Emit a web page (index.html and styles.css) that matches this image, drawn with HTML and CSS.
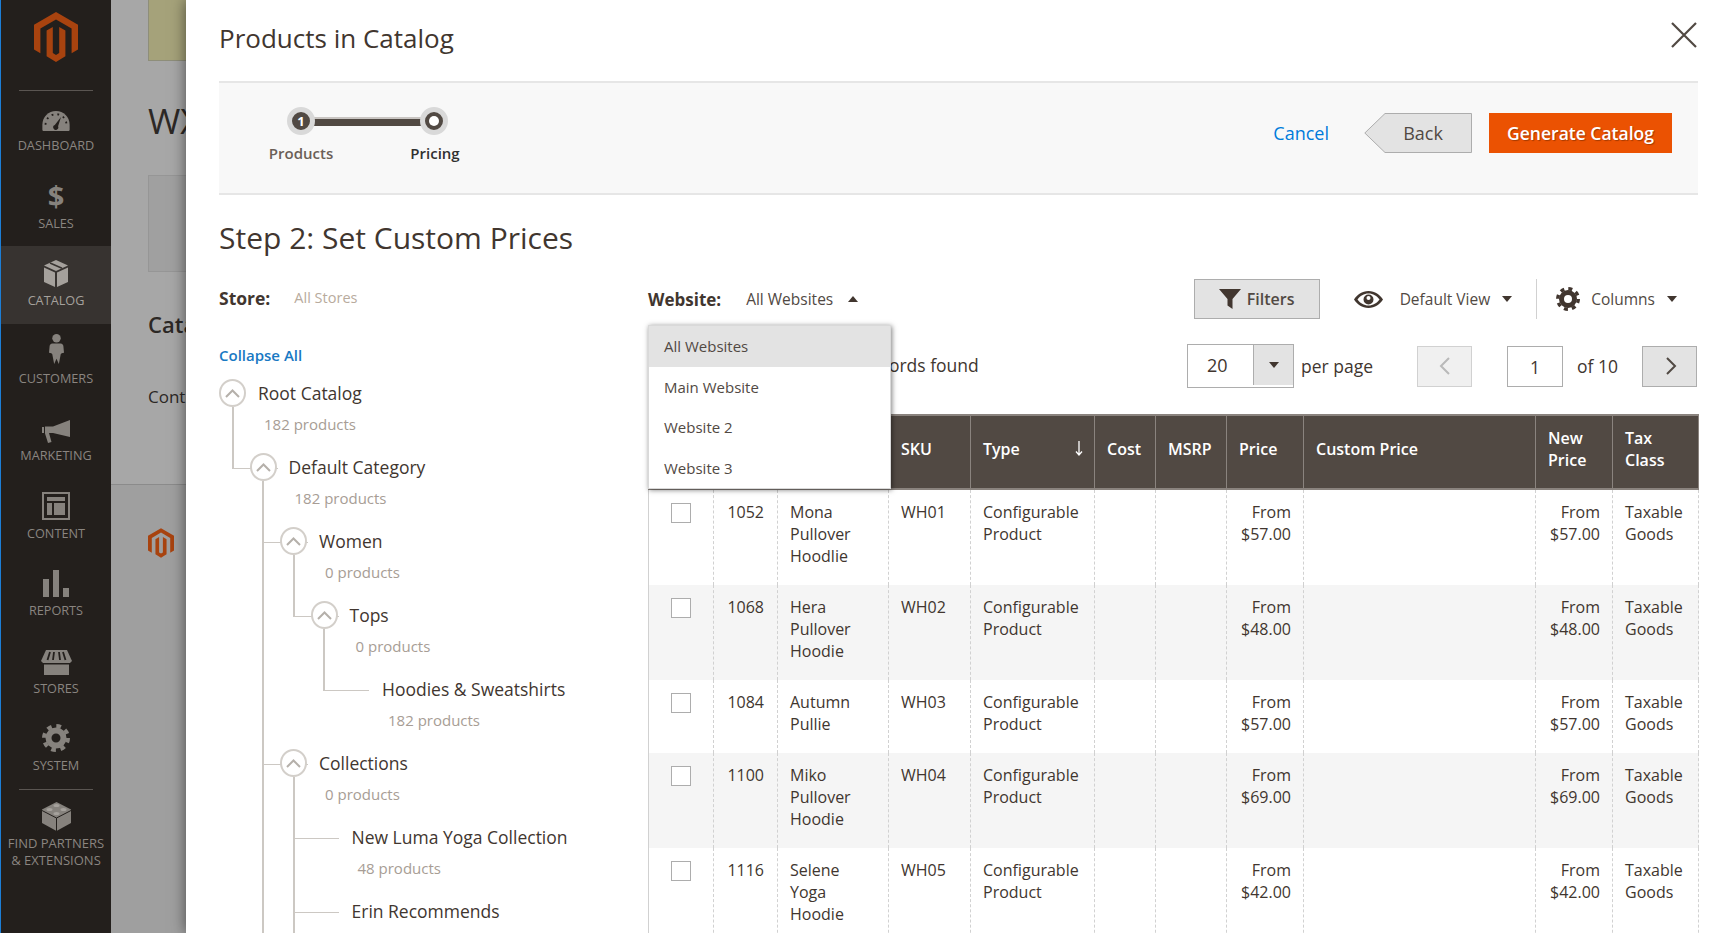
FILE: index.html
```html
<!DOCTYPE html>
<html lang="en">
<head>
    <meta charset="UTF-8">
    <meta name="viewport" content="width=device-width, initial-scale=1.0">
    <title>Products in Catalog</title>
    <link rel="stylesheet" href="styles.css">
</head>
<body>
    <aside class="sidebar">
        <div class="side-logo">
            <svg width="44" height="50" viewBox="0 0 44 50"><path fill="#a8430f" d="M22 0 44 12.7V37.6L37.6 41.3V16.4L22 7.4 6.4 16.4V41.3L0 37.6V12.7ZM12.6 18.5 18.8 14.9V41L22 42.9 25.2 41V14.9L31.4 18.5V44.2L22 50 12.6 44.2Z"/></svg>
        </div>
        <div class="side-sep"></div>
        <nav>
            <a class="nav-item">
                <span class="nav-icon"><svg class="down-3" width="28" height="20" viewBox="0 0 30 22"><path fill="#86827d" d="M15 0C6.7 0 0 6.7 0 15v5.5c0 .8.7 1.500 1.500 1.500h27c.8 0 1.500-.7 1.500-1.500V15C30 6.700 23.300 0 15 0Z"/><path fill="none" stroke="#231f1c" stroke-width="2" stroke-dasharray="2 4.500" d="M3.500 15a11.500 11.500 0 0 1 23 0"/><path fill="#231f1c" d="M20.500 6.500 17.300 16.800a2.800 2.800 0 1 1-3.600-1.500Z"/></svg></span>
                <span>Dashboard</span>
            </a>
            <a class="nav-item">
                <span class="nav-icon nav-dollar">$</span>
                <span>Sales</span>
            </a>
            <a class="nav-item active">
                <span class="nav-icon"><svg width="24" height="27" viewBox="0 0 24 27"><path fill="#a5a19c" d="M12 0 24 5.500 12 11 0 5.500Z"/><path fill="#a5a19c" d="M0 7.500 11 12.500V27L0 22ZM24 7.500 13 12.500V27L24 22Z"/><path fill="none" stroke="#373330" stroke-width="1.500" d="M6 3 18 8.200"/></svg></span>
                <span>Catalog</span>
            </a>
            <a class="nav-item">
                <span class="nav-icon"><svg class="up-2" width="15" height="30" viewBox="0 0 16 32"><circle cx="8" cy="4.500" r="4.500" fill="#86827d"/><path fill="#86827d" d="M3.500 10h9c1.500 0 2.500 1 2.800 2.500l.7 7.500-2.500.5-1 1L10.500 32 8 26.500 5.500 32 3.500 21.500l-1-1-2.500-.5.700-7.500C1 11 2 10 3.500 10Z"/></svg></span>
                <span>Customers</span>
            </a>
            <a class="nav-item">
                <span class="nav-icon"><svg class="down-3" width="28" height="23" viewBox="0 0 28 23"><path fill="#86827d" d="M28 0V17L11 13H7L9.500 22 6 23 3 13.500V6.500H11ZM0 7H2V13H0Z"/></svg></span>
                <span>Marketing</span>
            </a>
            <a class="nav-item">
                <span class="nav-icon"><svg width="28" height="28" viewBox="0 0 28 28"><path fill="none" stroke="#86827d" stroke-width="2" d="M1 1H27V27H1Z"/><path fill="#86827d" d="M5 5H23V9H5ZM5 11H10V23H5ZM12 11H23V23H12Z"/></svg></span>
                <span>Content</span>
            </a>
            <a class="nav-item">
                <span class="nav-icon"><svg width="26" height="27" viewBox="0 0 26 27"><path fill="#86827d" d="M0 9H6V27H0ZM10 0H16V27H10ZM20 18H26V27H20Z"/></svg></span>
                <span>Reports</span>
            </a>
            <a class="nav-item">
                <span class="nav-icon"><svg class="down-2" width="31" height="25" viewBox="0 0 31 25"><path fill="#86827d" d="M5 0H26L31 11 29 13H2L0 11Z"/><path fill="none" stroke="#231f1c" stroke-width="1.800" d="M9 2 6.500 10M13 2 12 10M18 2 19 10M22 2 24.500 10"/><path fill="#86827d" d="M3 14.500H28V25H3Z"/></svg></span>
                <span>Stores</span>
            </a>
            <a class="nav-item">
                <span class="nav-icon"><svg width="28" height="28" viewBox="0 0 28 28"><circle cx="14" cy="14" r="7.500" fill="none" stroke="#86827d" stroke-width="6"/><circle cx="14" cy="14" r="12" fill="none" stroke="#86827d" stroke-width="4" stroke-dasharray="4.700 4.720"/></svg></span>
                <span>System</span>
            </a>
            <div class="side-sep"></div>
            <a class="nav-item nav-last">
                <span class="nav-icon"><svg width="29" height="29" viewBox="0 0 29 29"><path fill="#86827d" d="M14.500 0 29 7.500V21L14.500 29 0 21V7.500Z"/><path fill="none" stroke="#231f1c" stroke-width="1" d="M0 8.500 14.500 16 29 8.500M14.500 16V29"/><ellipse cx="14.500" cy="3.500" rx="3" ry="1.500" fill="#a5a19c"/><ellipse cx="7.500" cy="7.500" rx="3" ry="1.500" fill="#a5a19c"/><ellipse cx="21.500" cy="7.500" rx="3" ry="1.500" fill="#a5a19c"/><ellipse cx="14.500" cy="11.500" rx="3" ry="1.500" fill="#a5a19c"/></svg></span>
                <span>Find Partners<br>&amp; Extensions</span>
            </a>
        </nav>
    </aside>

    <div class="backdrop">
        <div class="back-inner">
            <div class="back-thumb"></div>
            <div class="back-title">WX Catalog</div>
            <div class="back-box"></div>
            <div class="back-sub">Catalog</div>
            <div class="back-text">Content</div>
        </div>
        <div class="back-foot">
            <svg width="26" height="30" viewBox="0 0 44 50"><path fill="#a8430f" d="M22 0 44 12.700V37.600L37.600 41.300V16.400L22 7.400 6.400 16.400V41.300L0 37.600V12.700ZM12.600 18.500 18.800 14.900V41L22 42.900 25.200 41V14.900L31.400 18.500V44.200L22 50 12.600 44.200Z"/></svg>
        </div>
    </div>

    <main class="modal">
        <header class="modal-head">
            <h1>Products in Catalog</h1>
            <svg class="close-icon" width="26" height="26" viewBox="0 0 26 26"><path fill="none" stroke="#514943" stroke-width="2.200" d="M1 1 25 25M25 1 1 25"/></svg>
        </header>

        <section class="wizard">
            <div class="steps">
                <div class="step-track">
                    <span class="dot dot-num">1</span>
                    <span class="bar"></span>
                    <span class="dot dot-ring"></span>
                </div>
                <div class="step-labels">
                    <span class="step-label">Products</span>
                    <span class="step-label current">Pricing</span>
                </div>
            </div>
            <div class="wizard-actions">
                <a class="cancel">Cancel</a>
                <button class="btn-back">
                    <svg class="back-shape" viewBox="0 0 108 40" preserveAspectRatio="none"><polygon points="107.500,.5 21,.5 .8,20 21,39.500 107.500,39.500" fill="#e3e3e3" stroke="#adadad"/></svg>
                    <span>Back</span>
                </button>
                <button class="btn-primary">Generate Catalog</button>
            </div>
        </section>

        <h2>Step 2: Set Custom Prices</h2>

        <div class="columns">
            <div class="left-col">
                <div class="store-row">
                    <span class="field-label">Store:</span>
                    <span class="store-value">All Stores</span>
                </div>
                <a class="collapse-all">Collapse All</a>

                <ul class="tree tree-root">
                    <li>
                        <div class="node"><span class="toggle"><svg width="15" height="9" viewBox="0 0 15 9"><path fill="none" stroke="#b5b0aa" stroke-width="2" d="M1 8 7.500 1.500 14 8"/></svg></span><span class="node-name">Root Catalog</span></div>
                        <div class="count">182 products</div>
                        <ul class="tree">
                            <li>
                                <div class="node"><span class="toggle"><svg width="15" height="9" viewBox="0 0 15 9"><path fill="none" stroke="#b5b0aa" stroke-width="2" d="M1 8 7.500 1.500 14 8"/></svg></span><span class="node-name">Default Category</span></div>
                                <div class="count">182 products</div>
                                <ul class="tree">
                                    <li>
                                        <div class="node"><span class="toggle"><svg width="15" height="9" viewBox="0 0 15 9"><path fill="none" stroke="#b5b0aa" stroke-width="2" d="M1 8 7.500 1.500 14 8"/></svg></span><span class="node-name">Women</span></div>
                                        <div class="count">0 products</div>
                                        <ul class="tree">
                                            <li>
                                                <div class="node"><span class="toggle"><svg width="15" height="9" viewBox="0 0 15 9"><path fill="none" stroke="#b5b0aa" stroke-width="2" d="M1 8 7.500 1.500 14 8"/></svg></span><span class="node-name">Tops</span></div>
                                                <div class="count">0 products</div>
                                                <ul class="tree">
                                                    <li class="leaf">
                                                        <div class="node"><span class="node-name">Hoodies &amp; Sweatshirts</span></div>
                                                        <div class="count">182 products</div>
                                                    </li>
                                                </ul>
                                            </li>
                                        </ul>
                                    </li>
                                    <li>
                                        <div class="node"><span class="toggle"><svg width="15" height="9" viewBox="0 0 15 9"><path fill="none" stroke="#b5b0aa" stroke-width="2" d="M1 8 7.500 1.500 14 8"/></svg></span><span class="node-name">Collections</span></div>
                                        <div class="count">0 products</div>
                                        <ul class="tree">
                                            <li class="leaf">
                                                <div class="node"><span class="node-name">New Luma Yoga Collection</span></div>
                                                <div class="count">48 products</div>
                                            </li>
                                            <li class="leaf">
                                                <div class="node"><span class="node-name">Erin Recommends</span></div>
                                                <div class="count">12 products</div>
                                            </li>
                                            <li class="leaf">
                                                <div class="node"><span class="node-name">Performance Fabrics</span></div>
                                            </li>
                                        </ul>
                                    </li>
                                    <li class="leaf">
                                        <div class="node"><span class="node-name">Promotions</span></div>
                                    </li>
                                </ul>
                            </li>
                        </ul>
                    </li>
                </ul>
            </div>

            <div class="right-col">
                <div class="toolbar">
                    <span class="field-label">Website:</span>
                    <span class="website-value">All Websites</span>
                    <span class="caret caret-up"></span>
                    <button class="btn-filters">
                        <svg width="22" height="20" viewBox="0 0 22 20"><path fill="#41362f" d="M0 0H22L13.500 10V20L8.500 16.500V10Z"/></svg>
                        Filters
                    </button>
                    <svg class="eye" width="29" height="17" viewBox="0 0 29 17"><path fill="#41362f" fill-rule="evenodd" d="M14.500 0C21 0 26 4 29 8.500 26 13 21 17 14.500 17S3 13 0 8.500C3 4 8 0 14.500 0ZM14.500 2.500C10 2.500 6 5 3.500 8.500 6 12 10 14.500 14.500 14.500S23 12 25.500 8.500C23 5 19 2.500 14.500 2.500ZM14.500 3.500A5 5 0 1 1 14.500 13.500 5 5 0 1 1 14.500 3.500Z"/><circle cx="14.500" cy="7" r="2" fill="#fff"/></svg>
                    <span class="action-text">Default View</span>
                    <span class="caret caret-view"></span>
                    <span class="tool-sep"></span>
                    <svg class="gear" width="24" height="24" viewBox="0 0 24 24"><circle cx="12" cy="12" r="6.500" fill="none" stroke="#41362f" stroke-width="5"/><circle cx="12" cy="12" r="10.300" fill="none" stroke="#41362f" stroke-width="3.400" stroke-dasharray="4 4.090"/></svg>
                    <span class="action-text">Columns</span>
                    <span class="caret caret-cols"></span>
                </div>

                <div class="dropdown">
                    <div class="dropdown-item selected">All Websites</div>
                    <div class="dropdown-item">Main Website</div>
                    <div class="dropdown-item">Website 2</div>
                    <div class="dropdown-item">Website 3</div>
                </div>

                <div class="pager">
                    <span class="records">182 records found</span>
                    <div class="per-page">
                        <span class="per-value">20</span>
                        <span class="per-btn"><span class="caret"></span></span>
                    </div>
                    <span class="per-label">per page</span>
                    <button class="page-btn disabled"><svg width="11" height="18" viewBox="0 0 11 18"><path fill="none" stroke="#b9b9b9" stroke-width="2" d="M10 1 2 9 10 17"/></svg></button>
                    <span class="page-input">1</span>
                    <span class="page-of">of 10</span>
                    <button class="page-btn page-next"><svg width="11" height="18" viewBox="0 0 11 18"><path fill="none" stroke="#514943" stroke-width="2" d="M1 1 9 9 1 17"/></svg></button>
                </div>

                <table class="grid">
                    <colgroup>
                        <col class="c-check"><col class="c-id"><col class="c-name"><col class="c-sku"><col class="c-type"><col class="c-cost"><col class="c-msrp"><col class="c-price"><col class="c-custom"><col class="c-new"><col class="c-tax">
                    </colgroup>
                    <thead>
                        <tr>
                            <th></th>
                            <th>ID</th>
                            <th>Name</th>
                            <th>SKU</th>
                            <th><div class="th-sort">Type <svg class="sort-arrow" width="8" height="15" viewBox="0 0 8 15"><path fill="none" stroke="#fff" stroke-width="1.300" d="M4 0V14M1 10.500 4 14 7 10.500"/></svg></div></th>
                            <th>Cost</th>
                            <th>MSRP</th>
                            <th>Price</th>
                            <th>Custom Price</th>
                            <th>New Price</th>
                            <th>Tax Class</th>
                        </tr>
                    </thead>
                    <tbody>
                        <tr>
                            <td><span class="check"></span></td><td class="num">1052</td><td>Mona Pullover Hoodlie</td><td>WH01</td><td>Configurable Product</td><td></td><td></td><td class="num">From $57.00</td><td></td><td class="num">From $57.00</td><td>Taxable Goods</td>
                        </tr>
                        <tr>
                            <td><span class="check"></span></td><td class="num">1068</td><td>Hera Pullover Hoodie</td><td>WH02</td><td>Configurable Product</td><td></td><td></td><td class="num">From $48.00</td><td></td><td class="num">From $48.00</td><td>Taxable Goods</td>
                        </tr>
                        <tr>
                            <td><span class="check"></span></td><td class="num">1084</td><td>Autumn Pullie</td><td>WH03</td><td>Configurable Product</td><td></td><td></td><td class="num">From $57.00</td><td></td><td class="num">From $57.00</td><td>Taxable Goods</td>
                        </tr>
                        <tr>
                            <td><span class="check"></span></td><td class="num">1100</td><td>Miko Pullover Hoodie</td><td>WH04</td><td>Configurable Product</td><td></td><td></td><td class="num">From $69.00</td><td></td><td class="num">From $69.00</td><td>Taxable Goods</td>
                        </tr>
                        <tr>
                            <td><span class="check"></span></td><td class="num">1116</td><td>Selene Yoga Hoodie</td><td>WH05</td><td>Configurable Product</td><td></td><td></td><td class="num">From $42.00</td><td></td><td class="num">From $42.00</td><td>Taxable Goods</td>
                        </tr>
                    </tbody>
                </table>
            </div>
        </div>
    </main>
</body>
</html>
```
FILE: styles.css
```css
* {
    box-sizing: border-box;
}
html, body {
    height: 100%;
    margin: 0;
    overflow: hidden;
}
body {
    display: flex;
    font-family: "Open Sans", sans-serif;
    font-size: 16px;
    color: #41362f;
    background: #a5a5a5;
}

/* sidebar */
.sidebar {
    width: 111px;
    flex: none;
    background: #231f1c;
    border-left: 1px solid #1c7ed6;
}
.side-logo {
    height: 90px;
    padding-top: 12px;
    text-align: center;
}
.side-sep {
    height: 1px;
    margin: 0 18px;
    background: #5a5551;
}
.nav-item {
    display: block;
    height: 77.5px;
    padding-top: 8px;
    text-align: center;
    font-size: 12.7px;
    line-height: 17px;
    text-transform: uppercase;
    color: #8a8580;
}
.nav-item.active {
    background: #373330;
    color: #a5a19c;
}
.nav-last {
    font-size: 13px;
}
.nav-last .nav-icon {
    height: 37px;
}
.nav-icon {
    display: flex;
    height: 38px;
    align-items: center;
    justify-content: center;
    color: #86827d;
}
.nav-dollar {
    font-size: 29px;
    font-weight: 700;
}
.down-3 {
    margin-top: 6px;
}
.down-2 {
    margin-top: 4px;
}
.up-2 {
    margin-bottom: 4px;
}

/* page behind the modal */
.backdrop {
    width: 75px;
    flex: none;
    overflow: hidden;
    white-space: nowrap;
    color: #2c2825;
}
.back-inner {
    height: 485px;
    padding-left: 37px;
    border-bottom: 1px solid #8b8b8b;
    background: #a7a7a7;
}
.back-thumb {
    width: 200px;
    height: 61px;
    background: #a5a27a;
    border: 1px solid #8e8e7a;
    border-top: 0;
}
.back-title {
    margin-top: 36px;
    font-size: 35px;
    line-height: 48px;
}
.back-box {
    width: 200px;
    height: 97px;
    margin-top: 30px;
    border: 1px solid #969696;
    background: #a0a0a0;
}
.back-sub {
    margin-top: 37px;
    font-size: 22px;
    line-height: 30px;
    font-weight: 600;
}
.back-text {
    margin-top: 46px;
    font-size: 17px;
    line-height: 24px;
}
.back-foot {
    height: 448px;
    padding: 43px 0 0 37px;
    background: #9f9f9f;
}

/* modal */
.modal {
    flex: 1;
    min-width: 0;
    height: 933px;
    padding: 0 30px 0 33px;
    overflow: hidden;
    background: #fff;
    box-shadow: 0 0 14px rgba(0, 0, 0, .55);
    position: relative;
}
.modal-head {
    display: flex;
    justify-content: space-between;
    height: 81px;
}
h1 {
    margin: 20px 0 0;
    font-size: 26px;
    line-height: 36px;
    font-weight: 400;
}
.close-icon {
    margin-top: 22px;
    margin-right: 1px;
}
.wizard {
    display: flex;
    justify-content: space-between;
    height: 114px;
    background: #f8f8f8;
    border-top: 2px solid #e6e6e6;
    border-bottom: 2px solid #e6e6e6;
}
.steps {
    margin-left: 68px;
    padding-top: 24px;
}
.step-track {
    display: flex;
    align-items: center;
}
.dot {
    width: 28px;
    height: 28px;
    flex: none;
    border-radius: 50%;
    background: #514943;
    border: 5px solid #d9d9d9;
    position: relative;
    z-index: 1;
}
.dot-num {
    color: #fff;
    font-size: 13px;
    font-weight: 700;
    line-height: 18px;
    text-align: center;
}
.dot-ring::after {
    content: "";
    display: block;
    width: 10px;
    height: 10px;
    margin: 4px;
    border-radius: 50%;
    background: #fff;
}
.bar {
    width: 107px;
    height: 9px;
    flex: none;
    margin: 0 -1px;
    background: #514943;
    border-top: 2px solid #c9c5c2;
}
.step-labels {
    display: flex;
    margin: 8px 0 0 -53px;
}
.step-label {
    width: 134px;
    text-align: center;
    font-size: 15px;
    line-height: 20px;
    font-weight: 600;
    color: #6b5f57;
}
.step-label.current {
    color: #303030;
}
.wizard-actions {
    display: flex;
    align-items: flex-start;
    padding: 30px 26px 0 0;
}
.cancel {
    margin: 7px 35px 0 0;
    font-size: 18px;
    line-height: 26px;
    color: #007bdb;
}
button {
    font-family: inherit;
    cursor: pointer;
}
.btn-back {
    width: 108px;
    height: 40px;
    padding: 0 0 0 10px;
    border: 0;
    background: none;
    font-size: 18px;
    color: #514943;
    position: relative;
}
.back-shape {
    position: absolute;
    left: 0;
    top: 0;
    width: 100%;
    height: 100%;
}
.btn-back span {
    position: relative;
}
.btn-primary {
    width: 183px;
    height: 40px;
    margin-left: 17px;
    border: 0;
    background: #eb5202;
    color: #fff;
    font-size: 17.5px;
    font-weight: 600;
    text-shadow: 1px 1px 1px rgba(0, 0, 0, .3);
}
h2 {
    margin: 22px 0 0;
    height: 62px;
    font-size: 30px;
    line-height: 42px;
    font-weight: 400;
}
.columns {
    display: flex;
}
.left-col {
    width: 429px;
    flex: none;
}
.store-row {
    display: flex;
    align-items: center;
    height: 37px;
}
.field-label {
    font-weight: 700;
    font-size: 17px;
}
.store-row .field-label {
    font-size: 17.5px;
}
.store-value {
    margin-left: 24px;
    font-size: 14.5px;
    color: #b8ab9d;
}
.collapse-all {
    display: block;
    margin-top: 29px;
    font-size: 15px;
    line-height: 20px;
    font-weight: 600;
    color: #1979c3;
}

/* category tree */
.tree {
    list-style: none;
    margin: 0;
    padding: 0;
}
.tree .tree {
    margin-left: 30.5px;
}
.tree-root {
    margin-top: 14px;
}
.tree li {
    position: relative;
}
.tree .tree > li::before {
    content: "";
    position: absolute;
    left: -18px;
    top: -46px;
    width: 44px;
    height: 61px;
    border-left: 2px solid #ccc8c3;
    border-bottom: 1px solid #ccc8c3;
}
.tree .tree > li:not(:last-child)::after {
    content: "";
    position: absolute;
    left: -18px;
    top: 14px;
    bottom: 0;
    border-left: 2px solid #ccc8c3;
}
.node {
    display: flex;
    align-items: center;
    height: 28px;
    position: relative;
    z-index: 1;
}
.toggle {
    display: flex;
    align-items: center;
    justify-content: center;
    width: 27px;
    height: 28px;
    margin-right: 12px;
    border: 2px solid #d3cfca;
    border-radius: 50%;
    background: #fff;
}
.node-name {
    font-size: 17.5px;
    line-height: 26px;
    white-space: nowrap;
}
.leaf .node-name {
    margin-left: 41px;
}
.count {
    height: 46px;
    padding: 7px 0 0 45px;
    font-size: 15px;
    line-height: 20px;
    color: #a79d95;
}
.leaf .count {
    padding-left: 47px;
}

/* toolbar and pager */
.right-col {
    flex: 1;
    min-width: 0;
    position: relative;
}
.toolbar {
    display: flex;
    align-items: center;
    height: 40px;
}
.website-value {
    margin-left: 25px;
    font-size: 15.5px;
    color: #514943;
}
.caret {
    display: inline-block;
    width: 0;
    height: 0;
    border-left: 5px solid transparent;
    border-right: 5px solid transparent;
    border-top: 6px solid #41362f;
}
.caret-up {
    margin-left: 15px;
    border-top: 0;
    border-bottom: 6px solid #41362f;
}
.btn-filters {
    display: flex;
    align-items: center;
    justify-content: center;
    gap: 6px;
    width: 126px;
    height: 40px;
    margin-left: auto;
    background: #e3e3e3;
    border: 1px solid #adadad;
    font-size: 16px;
    font-weight: 600;
    color: #514943;
}
.eye {
    margin-left: 34px;
}
.action-text {
    margin-left: 17px;
    font-size: 15.5px;
    color: #514943;
}
.caret-view {
    margin-left: 12px;
}
.tool-sep {
    width: 1px;
    height: 40px;
    margin: 0 19px 0 24px;
    background: #d1d1d1;
}
.gear + .action-text {
    margin-left: 11px;
}
.caret-cols {
    margin: 0 21px 0 12px;
}
.dropdown {
    position: absolute;
    left: 0;
    top: 46px;
    width: 243px;
    height: 164px;
    background: #fff;
    box-shadow: 1px 1px 5px rgba(0, 0, 0, .5);
    border: 1px solid #d9d9d9;
    z-index: 5;
}
.dropdown-item {
    height: 40.7px;
    padding-left: 15px;
    font-size: 15px;
    line-height: 40px;
    color: #514943;
}
.dropdown-item.selected {
    background: #e3e3e3;
}
.pager {
    display: flex;
    align-items: center;
    height: 44px;
    margin-top: 25px;
    font-size: 17.5px;
}
.records {
    margin: 0 0 2px 181px;
    white-space: nowrap;
}
.per-page {
    display: flex;
    width: 107px;
    height: 44px;
    margin-left: auto;
    border: 1px solid #adadad;
}
.per-value {
    flex: 1;
    padding-left: 19px;
    font-size: 18px;
    line-height: 40px;
}
.per-btn {
    display: flex;
    align-items: center;
    justify-content: center;
    width: 40px;
    margin-bottom: 2px;
    background: #e3e3e3;
    border-left: 1px solid #adadad;
}
.per-label {
    margin: 0 44px 0 7px;
}
.page-btn {
    display: flex;
    align-items: center;
    justify-content: center;
    width: 55px;
    height: 41px;
    padding: 0;
    background: #e3e3e3;
    border: 1px solid #adadad;
}
.page-btn.disabled {
    background: #f0f0f0;
    border-color: #d1d1d1;
}
.page-input {
    width: 56px;
    height: 41px;
    margin-left: 35px;
    border: 1px solid #adadad;
    text-align: center;
    line-height: 41px;
}
.page-of {
    margin: 0 24px 0 14px;
}
.page-next {
    margin-right: 1px;
    padding-left: 3px;
}

/* products grid */
.grid {
    width: 1050px;
    margin-top: 26px;
    border-collapse: collapse;
    table-layout: fixed;
    line-height: 22px;
}
.c-check { width: 65px; }
.c-id { width: 64px; }
.c-name { width: 111px; }
.c-sku { width: 82px; }
.c-type { width: 124px; }
.c-cost { width: 61px; }
.c-msrp { width: 71px; }
.c-price { width: 77px; }
.c-custom { width: 232px; }
.c-new { width: 77px; }
.c-tax { width: 86px; }
th {
    height: 74px;
    padding: 0 12px 7px;
    background: #514943;
    color: #fff;
    font-weight: 600;
    text-align: left;
    border: 1px solid #8a837e;
    border-width: 2px 1px;
}
.th-sort {
    display: flex;
    justify-content: space-between;
    align-items: center;
}
.sort-arrow {
    margin-right: -1px;
}
td {
    padding: 11px 12px 18px;
    vertical-align: top;
    border-left: 1px dashed #d1d1d1;
    border-right: 1px dashed #d1d1d1;
}
td:first-child {
    border-left: 1px solid #d1d1d1;
}
td:nth-child(2) {
    padding-right: 13px;
}
tbody tr:nth-child(even) td {
    background: #f5f5f5;
}
.num {
    text-align: right;
}
.check {
    display: block;
    width: 20px;
    height: 20px;
    margin: 2px 0 0 10px;
    background: #fff;
    border: 1px solid #adadad;
}
```
